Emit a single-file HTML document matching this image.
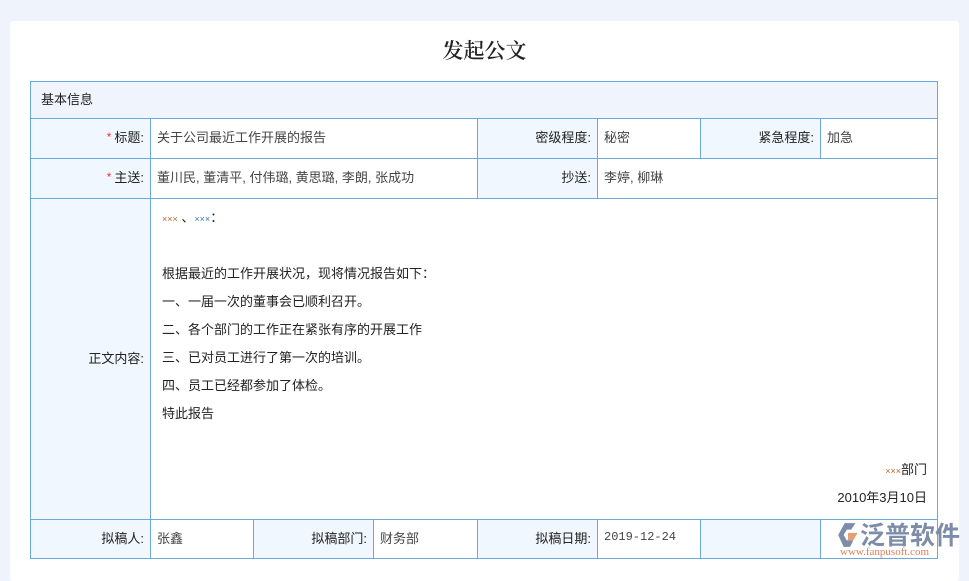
<!DOCTYPE html>
<html><head><meta charset="utf-8"><style>
body{margin:0;width:969px;height:565px;background:#eef3fc;font-family:"Liberation Sans","Noto Sans CJK SC",sans-serif;font-size:13px;color:#333;position:relative;overflow:hidden}
.card{position:absolute;left:10px;top:21px;width:949px;height:560px;background:#fff;border-radius:3px}
h1{position:absolute;left:0;top:35px;width:969px;margin:0;text-align:center;font-family:"Noto Serif CJK SC","Liberation Serif",serif;font-weight:600;font-size:21px;color:#222}
.b{position:absolute;box-sizing:border-box;border:1px solid #6aa8dd}
.l{background:#f0f7fe;text-align:right;padding-right:6px;color:#222}
.v{background:#fff;padding-left:6px;color:#444}
.c{display:flex;align-items:center;padding-bottom:4px}
.r{justify-content:flex-end}
.s{color:#e33;font-size:12px;margin-right:3px}
.x{font-size:9px}
.line{position:absolute;left:162px;color:#222}
</style></head><body>
<div class="card"></div>
<h1>发起公文</h1>
<div class="b c" style="left:30px;top:81px;width:908px;height:38px;background:#f0f5fd;padding-left:10px;color:#222">基本信息</div>

<div class="b c l r" style="left:30px;top:118px;width:121px;height:41px"><span class="s">*</span>标题:</div>
<div class="b c v" style="left:150px;top:118px;width:328px;height:41px">关于公司最近工作开展的报告</div>
<div class="b c l r" style="left:477px;top:118px;width:121px;height:41px">密级程度:</div>
<div class="b c v" style="left:597px;top:118px;width:104px;height:41px">秘密</div>
<div class="b c l r" style="left:700px;top:118px;width:121px;height:41px">紧急程度:</div>
<div class="b c v" style="left:820px;top:118px;width:118px;height:41px">加急</div>

<div class="b c l r" style="left:30px;top:158px;width:121px;height:41px"><span class="s">*</span>主送:</div>
<div class="b c v" style="left:150px;top:158px;width:328px;height:41px">董川民, 董清平, 付伟璐, 黄思璐, 李朗, 张成功</div>
<div class="b c l r" style="left:477px;top:158px;width:121px;height:41px">抄送:</div>
<div class="b c v" style="left:597px;top:158px;width:341px;height:41px">李婷, 柳琳</div>

<div class="b c l r" style="left:30px;top:198px;width:121px;height:322px">正文内容:</div>
<div class="b" style="left:150px;top:198px;width:788px;height:322px;background:#fff"></div>
<div class="line" style="top:207px"><span class="x" style="color:#c0602a">×××</span> 、<span class="x" style="color:#3b78b0">×××</span>：</div>
<div class="line" style="top:263px">根据最近的工作开展状况，现将情况报告如下：</div>
<div class="line" style="top:291px">一、一届一次的董事会已顺利召开。</div>
<div class="line" style="top:319px">二、各个部门的工作正在紧张有序的开展工作</div>
<div class="line" style="top:347px">三、已对员工进行了第一次的培训。</div>
<div class="line" style="top:375px">四、员工已经都参加了体检。</div>
<div class="line" style="top:403px">特此报告</div>
<div class="line" style="top:459px;left:auto;right:42px"><span class="x" style="color:#c0602a">×××</span>部门</div>
<div class="line" style="top:487px;left:auto;right:42px">2010年3月10日</div>

<div class="b c l r" style="left:30px;top:519px;width:121px;height:40px">拟稿人:</div>
<div class="b c v" style="left:150px;top:519px;width:104px;height:40px">张鑫</div>
<div class="b c l r" style="left:253px;top:519px;width:121px;height:40px">拟稿部门:</div>
<div class="b c v" style="left:373px;top:519px;width:105px;height:40px">财务部</div>
<div class="b c l r" style="left:477px;top:519px;width:121px;height:40px">拟稿日期:</div>
<div class="b c v" style="left:597px;top:519px;width:104px;height:40px;font-family:'Liberation Mono',monospace;font-size:12px">2019-12-24</div>
<div class="b" style="left:700px;top:519px;width:121px;height:40px;background:#f0f7fe"></div>
<div class="b" style="left:820px;top:519px;width:118px;height:40px;background:#fff"></div>
<svg style="position:absolute;left:838px;top:521px" width="22" height="28" viewBox="0 0 20 26"><path d="M6 2 L16 2 L12 8 L8 8 L5 13 L8 18 L14 18 L11 24 L5 24 L0 13 Z" fill="#7d8ca8"/><path d="M9 11 L18 11 L14 18 L9 18 Z" fill="#e3a07a"/></svg>
<div style="position:absolute;left:860px;top:516px;font-size:25px;color:#7d8ca8;font-weight:bold">泛普软件</div>
<div style="position:absolute;left:840px;top:546px;font-size:11px;color:#d9825a;font-family:'Liberation Serif',serif">www.fanpusoft.com</div>
</body></html>
